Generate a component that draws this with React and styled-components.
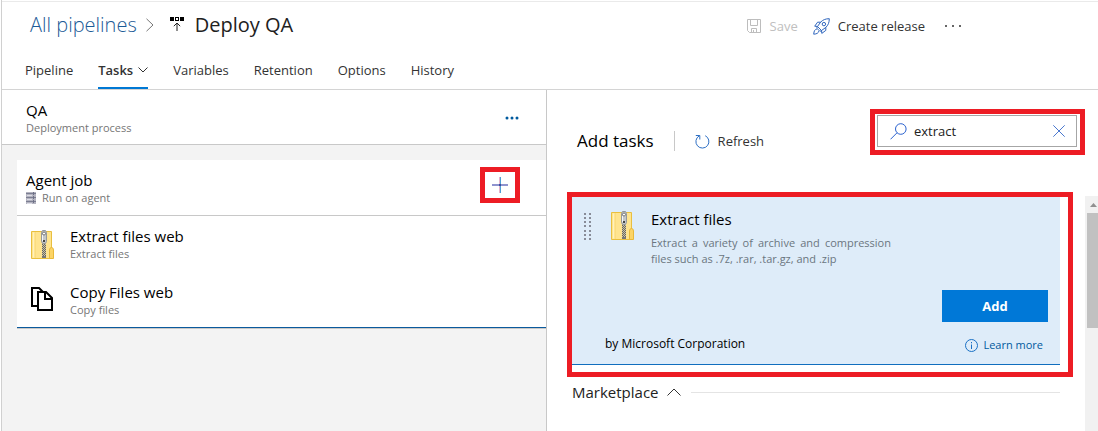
import React, { useState } from 'react';
import styled, { createGlobalStyle } from 'styled-components';

const GlobalStyle = createGlobalStyle`
  * { box-sizing: border-box; }
  body {
    margin: 0;
    background: #fff;
    color: #212121;
    font-family: "Open Sans", "Noto Sans", sans-serif;
    font-size: 13px;
    line-height: 16px;
  }
  button, input { font: inherit; color: inherit; }
  h1, h2, h3, p, ul { margin: 0; padding: 0; font-weight: 400; }
  a { text-decoration: none; }
  svg { display: block; flex: none; }
`;

const Page = styled.div`
  display: flex;
  flex-direction: column;
  min-height: 100vh;
  margin-left: 1px;
  padding-top: 1px;
  border-left: 1px solid #d0d0d0;
`;

const Header = styled.header`
  border-top: 1px solid #eaeaea;
  border-bottom: 1px solid #d4d4d4;
`;

const TitleBar = styled.div`
  display: flex;
  align-items: center;
  height: 46px;
  padding: 0 136px 0 28px;
`;

const Crumb = styled.a`
  color: #1b5a96;
  font-size: 20px;
  line-height: 28px;
  font-weight: 300;
  margin-right: 9px;
`;

const PageTitle = styled.h1`
  font-size: 20px;
  line-height: 28px;
  margin-left: 10px;
`;

const CrumbIcons = styled.div`
  display: flex;
  align-items: center;
  gap: 16px;
`;

const Toolbar = styled.div`
  display: flex;
  align-items: center;
  gap: 15px;
  margin-left: auto;
  padding-top: 2px;
`;

const ToolButton = styled.button`
  display: flex;
  align-items: center;
  gap: 8px;
  padding: 0;
  border: 0;
  background: none;
  white-space: nowrap;
  cursor: pointer;
  color: ${(p) => (p.disabled ? '#c0c0c0' : '#333')};
`;

const MoreSlot = styled.div`
  margin-left: 4px;
`;

const Tabs = styled.nav`
  display: flex;
  gap: 25px;
  height: 41px;
  padding-left: 23px;
`;

const Tab = styled.a`
  display: flex;
  align-items: center;
  gap: 5px;
  padding-top: 4px;
  color: #333;
  font-weight: ${(p) => (p.$active ? 600 : 400)};
  border-bottom: 2px solid ${(p) => (p.$active ? '#0078d4' : 'transparent')};
`;

const Columns = styled.main`
  flex: 1;
  display: grid;
  grid-template-columns: 545fr 551fr;
`;

const Process = styled.section`
  background: #f3f3f3;
  border-right: 1px solid #c8c8c8;
`;

const Row = styled.div`
  display: flex;
  align-items: center;
  gap: 15px;
  height: 56px;
  padding: 0 26px 0 ${(p) => p.$indent}px;
  background: #fff;
`;

const ProcessRow = styled(Row)`
  height: 55px;
  padding-top: 2px;
  border-bottom: 1px solid #c8c8c8;
`;

const JobRow = styled(Row)`
  border-bottom: 1px solid #c8c8c8;
`;

const RowText = styled.div`
  flex: 1;
`;

const RowTitle = styled.h2`
  color: #000;
  font-size: 15px;
  line-height: 20px;
`;

const RowNote = styled.p`
  display: flex;
  align-items: center;
  gap: 6px;
  color: #767676;
  font-size: 11px;
  line-height: 16px;
`;

const JobCard = styled.div`
  margin: 15px 0 0 15px;
  border-bottom: 1px solid #c8c8c8;
`;

const TaskList = styled.div`
  background: #fff;

  > :last-child {
    border-bottom: 1px solid #0b5a9d;
  }
`;

const Highlight = styled.div`
  border: 5px solid #ed1c24;
  padding: ${(p) => p.$pad || '0'};
`;

const PlusSlot = styled.div`
  align-self: flex-start;
  margin-top: 7px;
`;

const IconButton = styled.button`
  display: flex;
  align-items: center;
  justify-content: center;
  width: ${(p) => p.$w}px;
  height: ${(p) => p.$h}px;
  padding: 0;
  border: 0;
  background: none;
  cursor: pointer;
`;

const Catalog = styled.section`
  display: flex;
  flex-direction: column;
`;

const CatalogHead = styled.div`
  display: flex;
  justify-content: space-between;
  align-items: flex-start;
  height: 102px;
  padding: 19px 13px 0 30px;
`;

const CatalogTitle = styled.div`
  display: flex;
  align-items: center;
  height: 24px;
  margin-top: 20px;
`;

const Heading = styled.h2`
  color: ${(p) => (p.$small ? '#222' : '#000')};
  font-size: ${(p) => (p.$small ? 15 : 17)}px;
  line-height: 24px;
`;

const Separator = styled.span`
  width: 1px;
  height: 20px;
  margin: 0 20px;
  background: #c8c8c8;
`;

const SearchBox = styled.label`
  display: flex;
  align-items: center;
  width: 200px;
  height: 32px;
  padding: 0 11px 0 12px;
  border: 1px solid #a6a6a6;
`;

const SearchInput = styled.input`
  flex: 1;
  min-width: 0;
  margin-left: 7px;
  padding: 0;
  border: 0;
  outline: 0;
  background: none;
`;

const CatalogBody = styled.div`
  flex: 1;
  display: grid;
  grid-template-columns: minmax(0, 1fr) 13px;
  gap: 12px;
  padding-left: 20px;
`;

const TaskCard = styled.article`
  display: flex;
  flex-direction: column;
  height: 168px;
  padding: 13px 12px 12px;
  background: #deecf9;
  border-bottom: 1px solid #106ebe;
`;

const CardTop = styled.div`
  display: flex;
  align-items: flex-start;
`;

const CardIcon = styled.div`
  margin: ${(p) => p.$m};
`;

const CardTitle = styled.h3`
  color: #000;
  font-size: 15px;
  line-height: 18px;
`;

const CardText = styled.p`
  width: 240px;
  margin-top: 7px;
  color: #6b7680;
  font-size: 11px;
  line-height: 16px;
  text-align: justify;
`;

const AddButton = styled.button`
  align-self: flex-end;
  width: 106px;
  height: 32px;
  margin-top: auto;
  border: 0;
  background: #0078d7;
  color: #fff;
  font-weight: 700;
  cursor: pointer;
`;

const CardFoot = styled.div`
  display: flex;
  justify-content: space-between;
  align-items: center;
  margin-top: 14px;
  padding: 0 5px 0 21px;
  color: #000;
  font-size: 12px;
`;

const LearnMore = styled.a`
  display: flex;
  align-items: center;
  gap: 5px;
  padding-top: 2px;
  color: #005a9e;
  font-size: 11px;
  line-height: 14px;
`;

const Group = styled.div`
  display: flex;
  align-items: center;
  gap: 8px;
  padding: 3px 13px 0 5px;
`;

const Rule = styled.span`
  flex: 1;
  height: 1px;
  margin-left: 2px;
  background: #e4e4e4;
`;

const ScrollTrack = styled.div`
  display: flex;
  flex-direction: column;
  align-items: flex-end;
  margin-top: 4px;
  padding-top: 7px;
  background: #f1f1f1;
`;

const ScrollThumb = styled.div`
  width: 11px;
  height: 115px;
  margin-top: 6px;
  background: #c1c1c1;
`;

const Chevron = ({ w, h, d, color = '#333' }) => (
  <svg width={w} height={h} viewBox={`0 0 ${w} ${h}`} fill="none" stroke={color}>
    <path d={d} />
  </svg>
);

const StageIcon = () => (
  <svg width="15" height="17" viewBox="0 0 15 17">
    <path fill="#000" d="M0 0h4v4H0zM10 0h4v4h-4zM5 0h4v4H5z" />
    <path fill="#fff" d="M6 1h2v2H6z" />
    <path d="M7 14V6M3.800 9.200 7 6l3.200 3.200" fill="none" stroke="#222" />
  </svg>
);

const SaveIcon = () => (
  <svg width="15" height="15" viewBox="0 0 15 15" fill="none" stroke="#bdbdbd">
    <path d="M.5.5h13v13h-11l-2-2zM3.500.5v6h7v-6M4.500 13.500v-4h5v4M6.500 11v2.500" />
  </svg>
);

const RocketIcon = () => (
  <svg width="17" height="17" viewBox="0 0 17 17" fill="none" stroke="#2f66bd">
    <path d="M16.300.7C12.500.7 9.800 1.800 7.500 4.300L4.500 8.500l4 4 4.200-3C15.200 7.200 16.300 4.500 16.300.7z" />
    <path d="M7.800 4.200H4.600L1.700 8.200l2.800.3M12.800 9.200v3.200l-4 3-.3-2.900M4.500 8.500l-.8 1.600 3.200 3.200 1.600-.8" />
    <path d="M3.700 11.300c-1.800 0-2.700 1.500-3 4.900 3.200-.2 4.800-1.200 5-3" />
    <circle cx="10.900" cy="6.100" r="1.700" />
  </svg>
);

const Dots = ({ color, r, w, gap }) => (
  <svg width={w} height="4" viewBox={`0 0 ${w} 4`} fill={color}>
    {[0, 1, 2].map((i) => (
      <circle key={i} cx={2 + i * gap} cy="2" r={r} />
    ))}
  </svg>
);

const ServerIcon = () => (
  <svg width="10" height="12" viewBox="0 0 10 12">
    <path fill="#b4b4c0" d="M0 0h10v12H0z" />
    <path stroke="#7b7e92" d="M0 1.500h10M0 5.500h10M0 9.500h10" />
    <path stroke="#dcdce6" d="M1 3.500h5M1 7.500h5M1 11.500h5" />
    <path stroke="#6d7086" d="M7.500 0v12" strokeDasharray="3 1" />
  </svg>
);

const ZipIcon = () => (
  <svg width="24" height="29" viewBox="0 0 24 29">
    <path fill="#ffe48f" stroke="#e9bf3f" d="M.5 1.500h20v27H.5z" />
    <path stroke="#fff1bd" d="M2.500 2.500v25" />
    <path fill="#f7d774" d="M4 2h1v26H4z" opacity=".6" />
    <path fill="#fcd466" stroke="#e9b93a" d="M18.500 28.500V20q0-2.500 2-2.500t2 2.500v8.500z" />
    <path fill="#c9c2a8" d="M11 13h4v15h-4z" />
    <path stroke="#6b675c" strokeDasharray="1 1" d="M11.500 14v12M13.500 14v12" />
    <path stroke="#6b675c" strokeDasharray="1 1" strokeDashoffset="1" d="M12.500 14v12M14.500 14v12" />
    <path fill="#777" d="M11 26h4v2h-4z" />
    <path fill="#c3c6c9" stroke="#94989c" d="M11.500.5h3l1 2v9l-1 2h-3l-1-2v-9z" />
    <path stroke="#f4f5f6" d="M11.500 5v6" />
    <circle cx="13" cy="3.500" r="1.500" fill="#fff" stroke="#777" />
    <path fill="#444" d="M12 10h2v2h-2z" />
  </svg>
);

const CopyIcon = () => (
  <svg width="24" height="25" viewBox="0 0 24 25" fill="none" stroke="#000" strokeWidth="2">
    <path d="M7 19H1V1h7l4 4" />
    <path d="M7 5h8l6 6v12H7z" />
    <path d="M14 5v7h7" />
  </svg>
);

const PlusIcon = () => (
  <svg width="16" height="16" viewBox="0 0 16 16">
    <path d="M0 8h16" stroke="#8f93cf" strokeWidth="2" />
    <path d="M7.500 0v16" stroke="#e3b3cb" />
    <path d="M8.500 0v16" stroke="#4e9fd6" />
    <path d="M7 8h2" stroke="#3b4f9c" strokeWidth="2" />
  </svg>
);

const RefreshIcon = () => (
  <svg width="15" height="15" viewBox="0 0 15 15" fill="none" stroke="#2d6fc4">
    <path d="M10.200 1.700A6.500 6.500 0 1 1 4.200 1.900M.8 1.500h4v4" />
  </svg>
);

const SearchIcon = () => (
  <svg width="17" height="17" viewBox="0 0 17 17" fill="none" stroke="#2b62cf">
    <circle cx="10.800" cy="6" r="5.300" />
    <path d="M7 9.800.5 16.300" />
  </svg>
);

const CloseIcon = () => (
  <svg width="12" height="12" viewBox="0 0 12 12" stroke="#4a78cf">
    <path d="M.3.3l11.400 11.400M11.700.3.3 11.700" />
  </svg>
);

const InfoIcon = () => (
  <svg width="13" height="13" viewBox="0 0 13 13" fill="none" stroke="#1a70c4">
    <circle cx="6.500" cy="6.500" r="6" />
    <path d="M6.500 5.500v4.500M6.500 3v1.300" />
  </svg>
);

const GripIcon = () => (
  <svg width="7" height="29" viewBox="0 0 7 29" fill="#888c98">
    {[0, 1, 2, 3, 4, 5, 6].map((i) => (
      <path key={i} d={`M0 ${i * 4 + (i > 3 ? 1 : 0)}h2v2H0zM5 ${i * 4 + (i > 3 ? 1 : 0)}h2v2H5z`} />
    ))}
  </svg>
);

const ArrowUp = () => (
  <svg width="7" height="4" viewBox="0 0 7 4">
    <path fill="#909090" d="M0 4 3.500 0 7 4z" />
  </svg>
);

const ArrowSlot = styled.div`
  padding-right: 1px;
`;

const tabs = ['Pipeline', 'Tasks', 'Variables', 'Retention', 'Options', 'History'];

export default function App() {
  const [query, setQuery] = useState('extract');
  return (
    <>
      <GlobalStyle />
      <Page>
        <Header>
          <TitleBar>
            <Crumb href="#pipelines">All pipelines</Crumb>
            <CrumbIcons>
              <Chevron w={8} h={14} d="M.5.8 7 7 .5 13.200" color="#777" />
              <StageIcon />
            </CrumbIcons>
            <PageTitle>Deploy QA</PageTitle>
            <Toolbar>
              <ToolButton disabled><SaveIcon />Save</ToolButton>
              <ToolButton><RocketIcon />Create release</ToolButton>
              <MoreSlot>
                <ToolButton aria-label="More actions"><Dots color="#333" r={1} w={18} gap={7} /></ToolButton>
              </MoreSlot>
            </Toolbar>
          </TitleBar>
          <Tabs>
            {tabs.map((name) => (
              <Tab key={name} href={`#${name}`} $active={name === 'Tasks'}>
                {name}
                {name === 'Tasks' && <Chevron w={10} h={6} d="M.5.5 5 5 9.500.5" />}
              </Tab>
            ))}
          </Tabs>
        </Header>
        <Columns>
          <Process>
            <ProcessRow $indent={24}>
              <RowText>
                <RowTitle>QA</RowTitle>
                <RowNote>Deployment process</RowNote>
              </RowText>
              <IconButton $w={16} $h={20} aria-label="Process actions">
                <Dots color="#005a9e" r={1.5} w={14} gap={5} />
              </IconButton>
            </ProcessRow>
            <JobCard>
              <JobRow $indent={9}>
                <RowText>
                  <RowTitle>Agent job</RowTitle>
                  <RowNote><ServerIcon />Run on agent</RowNote>
                </RowText>
                <PlusSlot>
                  <Highlight>
                    <IconButton $w={30} $h={26} aria-label="Add a task"><PlusIcon /></IconButton>
                  </Highlight>
                </PlusSlot>
              </JobRow>
              <TaskList>
                <Row $indent={14}>
                  <ZipIcon />
                  <RowText>
                    <RowTitle>Extract files web</RowTitle>
                    <RowNote>Extract files</RowNote>
                  </RowText>
                </Row>
                <Row $indent={14}>
                  <CopyIcon />
                  <RowText>
                    <RowTitle>Copy Files web</RowTitle>
                    <RowNote>Copy files</RowNote>
                  </RowText>
                </Row>
              </TaskList>
            </JobCard>
          </Process>
          <Catalog>
            <CatalogHead>
              <CatalogTitle>
                <Heading>Add tasks</Heading>
                <Separator />
                <ToolButton><RefreshIcon />Refresh</ToolButton>
              </CatalogTitle>
              <Highlight $pad="1px 3px 3px 2px">
                <SearchBox>
                  <SearchIcon />
                  <SearchInput aria-label="Search tasks" value={query} onChange={(e) => setQuery(e.target.value)} />
                  <IconButton $w={12} $h={12} aria-label="Clear search" onClick={() => setQuery('')}><CloseIcon /></IconButton>
                </SearchBox>
              </Highlight>
            </CatalogHead>
            <CatalogBody>
              <div>
                <Highlight $pad="0 8px 7px 0">
                  <TaskCard>
                    <CardTop>
                      <CardIcon $m="3px 20px 0 0"><GripIcon /></CardIcon>
                      <CardIcon $m="1px 16px 0 0"><ZipIcon /></CardIcon>
                      <div>
                        <CardTitle>Extract files</CardTitle>
                        <CardText>Extract a variety of archive and compression files such as .7z, .rar, .tar.gz, and .zip</CardText>
                      </div>
                    </CardTop>
                    <AddButton>Add</AddButton>
                    <CardFoot>
                      <span>by Microsoft Corporation</span>
                      <LearnMore href="#learn"><InfoIcon />Learn more</LearnMore>
                    </CardFoot>
                  </TaskCard>
                </Highlight>
                <Group>
                  <Heading $small>Marketplace</Heading>
                  <Chevron w={14} h={8} d="M.5 7.500 7 1l6.500 6.500" />
                  <Rule />
                </Group>
              </div>
              <ScrollTrack>
                <ArrowSlot><ArrowUp /></ArrowSlot>
                <ScrollThumb />
              </ScrollTrack>
            </CatalogBody>
          </Catalog>
        </Columns>
      </Page>
    </>
  );
}
